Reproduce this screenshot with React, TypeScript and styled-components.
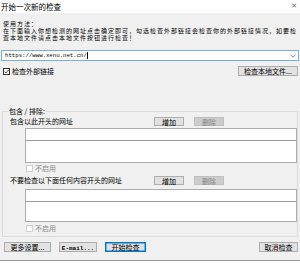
import React from "react";
import styled, { createGlobalStyle, css } from "styled-components";

const GlobalStyle = createGlobalStyle`
  html, body {
    margin: 0;
    padding: 0;
    background: #ffffff;
  }
  body {
    font-family: "Noto Sans CJK SC", "Noto Sans", sans-serif;
    font-size: 7px;
    color: #000;
  }
`;

const Window = styled.div`
  width: 300px;
  height: 261px;
  box-sizing: border-box;
  background: #f0f0f0;
  border-bottom: 1px solid #9a9a9a;
  display: flex;
  flex-direction: column;
  overflow: hidden;
`;

const TitleBar = styled.div`
  height: 13px;
  flex: none;
  background: #ffffff;
  display: flex;
  align-items: center;
  justify-content: space-between;
  padding: 0 3px 0 1px;
  font-size: 7.5px;
  line-height: 13px;
`;

const CloseGlyph = styled.span`
  color: #6d6d6d;
  font-family: "DejaVu Sans", sans-serif;
  font-size: 7px;
`;

const Instructions = styled.div`
  padding: 8px 0 0 3px;
  display: flex;
  flex-direction: column;
  gap: 1px;
  font-size: 6px;
  letter-spacing: 1px;
  line-height: 6px;
  white-space: nowrap;
`;

const Combo = styled.div`
  margin: 9px 1px 0 1px;
  height: 11px;
  box-sizing: border-box;
  border: 1px solid #7aaee3;
  background: #ffffff;
  display: flex;
  align-items: center;
  padding: 0 2px 0 3px;
`;

const ComboText = styled.span`
  flex: 1;
  font-family: "Liberation Mono", monospace;
  font-size: 5.7px;
  line-height: 9px;
`;

const Caret = styled.span`
  display: inline-block;
  width: 0.5px;
  height: 7px;
  background: #000;
  vertical-align: middle;
`;

const OptionRow = styled.div`
  margin-top: 5px;
  height: 10px;
  display: flex;
  align-items: center;
  justify-content: space-between;
  padding: 0 2px 0 3px;
`;

const CheckLabel = styled.label<{ $disabled?: boolean }>`
  display: flex;
  align-items: center;
  gap: 2px;
  font-size: 7px;
  line-height: 7px;
  color: ${(p) => (p.$disabled ? "#8a8a8a" : "#000")};
`;

const Box = styled.span<{ $disabled?: boolean }>`
  width: 7px;
  height: 7px;
  box-sizing: border-box;
  border: 1px solid ${(p) => (p.$disabled ? "#cfcfcf" : "#333")};
  background: #fff;
  display: flex;
  align-items: center;
  justify-content: center;
`;

const Button = styled.button<{ $w: number; $default?: boolean }>`
  width: ${(p) => p.$w}px;
  height: 10px;
  box-sizing: border-box;
  margin: 0;
  padding: 0;
  border: 1px solid #adadad;
  background: #e1e1e1;
  font-family: "Noto Sans CJK SC", "Noto Sans", sans-serif;
  font-size: 7px;
  line-height: 8px;
  color: #000;
  white-space: nowrap;
  ${(p) =>
    p.$default &&
    css`
      border-color: #0078d7;
      box-shadow: inset 0 0 0 0.5px #0078d7;
    `}
  &:disabled {
    background: #cccccc;
    border-color: #bfbfbf;
    color: #838383;
  }
`;

const MonoText = styled.span`
  font-family: "Liberation Mono", monospace;
  font-size: 6px;
  font-weight: bold;
`;

const Group = styled.div`
  position: relative;
  margin: 35px 2px 0 2px;
  border: 1px solid #dcdcdc;
  padding: 5px 0 4px 7px;
  display: flex;
  flex-direction: column;
`;

const Legend = styled.span`
  position: absolute;
  left: 5px;
  top: -4px;
  padding: 0 1px;
  background: #f0f0f0;
  font-size: 7px;
  line-height: 7px;
`;

const LabelRow = styled.div<{ $gap: number }>`
  margin-top: ${(p) => p.$gap}px;
  height: 9px;
  display: flex;
  align-items: center;
  gap: 10px;
  & > ${Button} {
    height: 9px;
  }
`;

const RowLabel = styled.span`
  width: 134px;
  font-size: 7px;
  line-height: 7px;
  white-space: nowrap;
`;

const ListBox = styled.div<{ $h: number; $gap: number }>`
  margin: ${(p) => p.$gap}px 0 0 15px;
  height: ${(p) => p.$h}px;
  box-sizing: border-box;
  border: 1px solid #adadad;
  background: #fff;
  display: flex;
  flex-direction: column;
`;

const ListEdit = styled.div`
  height: 11px;
  flex: none;
  border-bottom: 1px solid #9c9c9c;
`;

const DisableRow = styled.div<{ $gap: number }>`
  margin: ${(p) => p.$gap}px 0 0 16px;
  height: 7px;
  display: flex;
`;

const Footer = styled.div`
  margin-top: 5px;
  display: flex;
  align-items: center;
  padding: 0 2px 0 4px;
`;

const FooterLeft = styled.div`
  flex: 1;
  display: flex;
  gap: 8px;
`;

const Chevron = () => (
  <svg width="6" height="4" viewBox="0 0 6 4">
    <path d="M0.5 0.8 L3 3.2 L5.5 0.8" fill="none" stroke="#555" strokeWidth="0.7" />
  </svg>
);

const Tick = () => (
  <svg width="5" height="5" viewBox="0 0 5 5">
    <path d="M0.6 2.6 L2 4 L4.5 0.9" fill="none" stroke="#222" strokeWidth="0.8" />
  </svg>
);

const App: React.FC = () => {
  return (
    <>
      <GlobalStyle />
      <Window>
        <TitleBar>
          <span>开始一次新的检查</span>
          <CloseGlyph>✕</CloseGlyph>
        </TitleBar>
        <Instructions>
          <div>使用方法：</div>
          <div>在下面输入你想检测的网址点击确定即可，勾选检查外部链接会检查你的外部链接情况，如要检</div>
          <div>查本地文件请点击本地文件按钮进行检查！</div>
        </Instructions>
        <Combo>
          <ComboText>
            https://www.xenu.net.cn/
            <Caret />
          </ComboText>
          <Chevron />
        </Combo>
        <OptionRow>
          <CheckLabel>
            <Box>
              <Tick />
            </Box>
            检查外部链接
          </CheckLabel>
          <Button $w={60}>检查本地文件...</Button>
        </OptionRow>
        <Group>
          <Legend>包含 / 排除:</Legend>
          <LabelRow $gap={0}>
            <RowLabel>包含以此开头的网址</RowLabel>
            <Button $w={30}>增加</Button>
            <Button $w={30} disabled>
              删除
            </Button>
          </LabelRow>
          <ListBox $h={35} $gap={2}>
            <ListEdit />
          </ListBox>
          <DisableRow $gap={2}>
            <CheckLabel $disabled>
              <Box $disabled />
              不启用
            </CheckLabel>
          </DisableRow>
          <LabelRow $gap={4}>
            <RowLabel>不要检查以下面任何内容开头的网址</RowLabel>
            <Button $w={30}>增加</Button>
            <Button $w={30} disabled>
              删除
            </Button>
          </LabelRow>
          <ListBox $h={33} $gap={4}>
            <ListEdit />
          </ListBox>
          <DisableRow $gap={3}>
            <CheckLabel $disabled>
              <Box $disabled />
              不启用
            </CheckLabel>
          </DisableRow>
        </Group>
        <Footer>
          <FooterLeft>
            <Button $w={47}>更多设置...</Button>
            <Button $w={38}>
              <MonoText>E-mail...</MonoText>
            </Button>
            <Button $w={41} $default>
              开始检查
            </Button>
          </FooterLeft>
          <Button $w={39}>取消检查</Button>
        </Footer>
      </Window>
    </>
  );
};

export default App;
